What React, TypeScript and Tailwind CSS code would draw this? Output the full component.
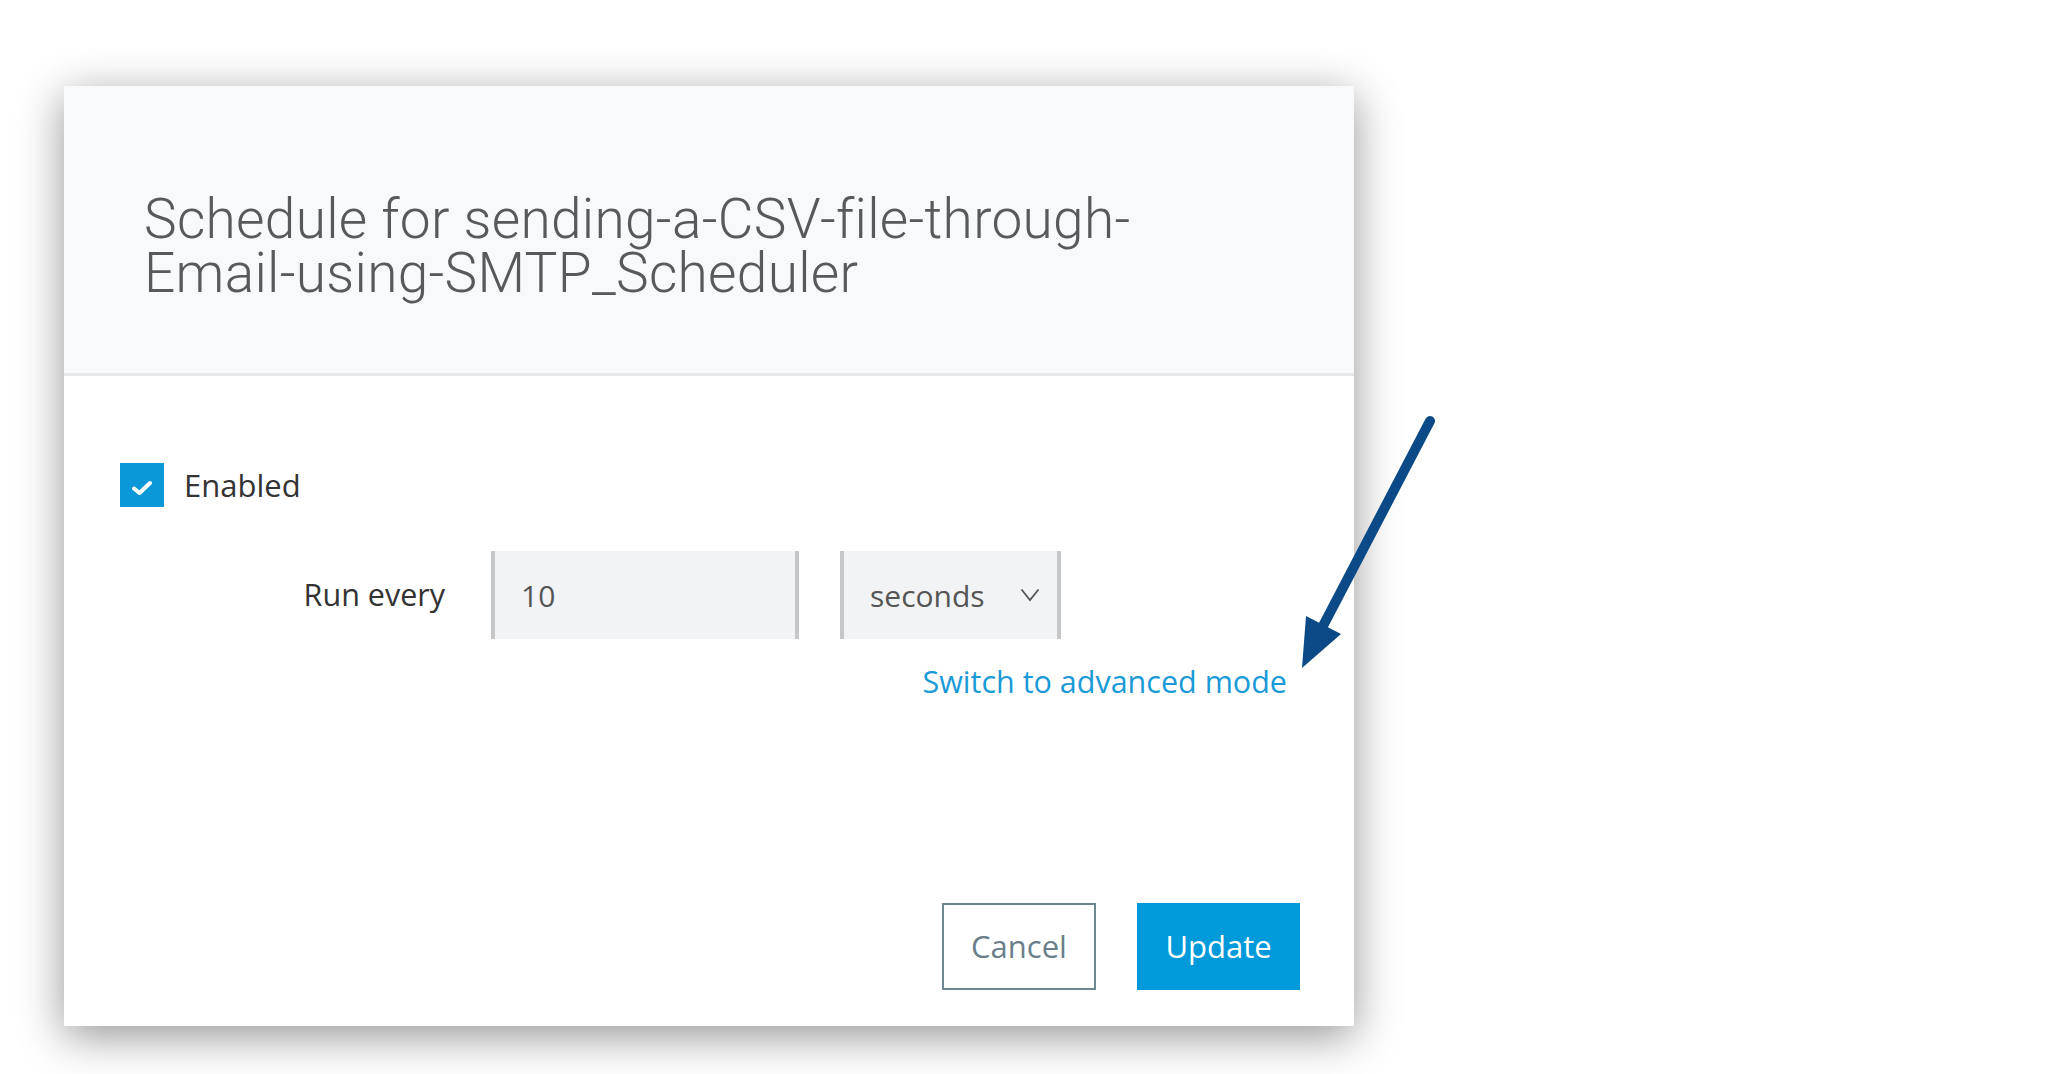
import React from 'react';

const CheckIcon: React.FC = () => (
    <svg width="22" height="16" viewBox="0 0 22 16" className="mt-[6px]">
        <path d="M3 8.5 L8.5 13 L19 3" fill="none" stroke="#fff" strokeWidth="4" strokeLinecap="round" strokeLinejoin="round" />
    </svg>
);

const Chevron: React.FC = () => (
    <svg width="20" height="14" viewBox="0 0 20 14">
        <path d="M1.5 1.5 L10 12 L18.5 1.5" fill="none" stroke="#555" strokeWidth="1.8" />
    </svg>
);

export default function App() {
    return (
        <div className="relative min-h-screen w-full bg-white pl-[64px] pt-[86px] font-['Open_Sans',sans-serif]">
            <div className="flex h-[940px] w-[1290px] flex-col bg-white shadow-[0_10px_42px_rgba(0,0,0,0.42)]">
                <header className="h-[290px] border-b-[3px] border-[#e6e8eb] bg-[#f8f9fa] pl-[80px] pt-[106px]">
                    <h1 className="font-['Roboto',sans-serif] text-[55px] font-light leading-[54px] tracking-[0.3px] text-[#58595b]">
                        Schedule for sending-a-CSV-file-through-
                        <br />
                        Email-using-SMTP_Scheduler
                    </h1>
                </header>

                <div className="flex flex-1 flex-col pl-[56px] pr-[67px] pt-[87px]">
                    <label className="flex h-[44px] items-center gap-[20px]">
                        <span className="flex h-[44px] w-[44px] items-center justify-center bg-[#0a98d9]">
                            <CheckIcon />
                        </span>
                        <span className="text-[31px] text-[#333]">Enabled</span>
                    </label>

                    <div className="mt-[44px] flex items-center">
                        <span className="w-[325px] text-right text-[30.5px] text-[#333]">Run every</span>
                        <div className="ml-[46px] flex h-[88px] w-[308px] items-center border-x-4 border-[#c6c7c9] bg-[#f2f3f5] pl-[26px] text-[30px] text-[#555]">
                            10
                        </div>
                        <div className="ml-[41px] flex h-[88px] w-[221px] items-center justify-between border-x-4 border-[#c6c7c9] bg-[#f2f3f5] pl-[26px] pr-[17px] text-[30px] text-[#555]">
                            <span>seconds</span>
                            <Chevron />
                        </div>
                    </div>

                    <div className="mt-[20px] flex justify-end">
                        <a className="text-[30.5px] text-[#1a9ad6]">Switch to advanced mode</a>
                    </div>
                </div>

                <div className="flex justify-end gap-[41px] pb-[36px] pr-[54px]">
                    <button className="flex h-[87px] w-[154px] items-center justify-center border-2 border-[#6f8693] bg-white text-[31px] text-[#6b7f8b]">
                        Cancel
                    </button>
                    <button className="flex h-[87px] w-[163px] items-center justify-center bg-[#0099da] text-[31px] text-white">
                        Update
                    </button>
                </div>
            </div>

            <svg className="pointer-events-none absolute left-0 top-0" width="2048" height="1074" viewBox="0 0 2048 1074">
                <line x1="1430" y1="421" x2="1323" y2="626" stroke="#0b4a86" strokeWidth="10" strokeLinecap="round" />
                <polygon points="1302,668 1306,616 1341,634" fill="#0b4a86" />
            </svg>
        </div>
    );
}
